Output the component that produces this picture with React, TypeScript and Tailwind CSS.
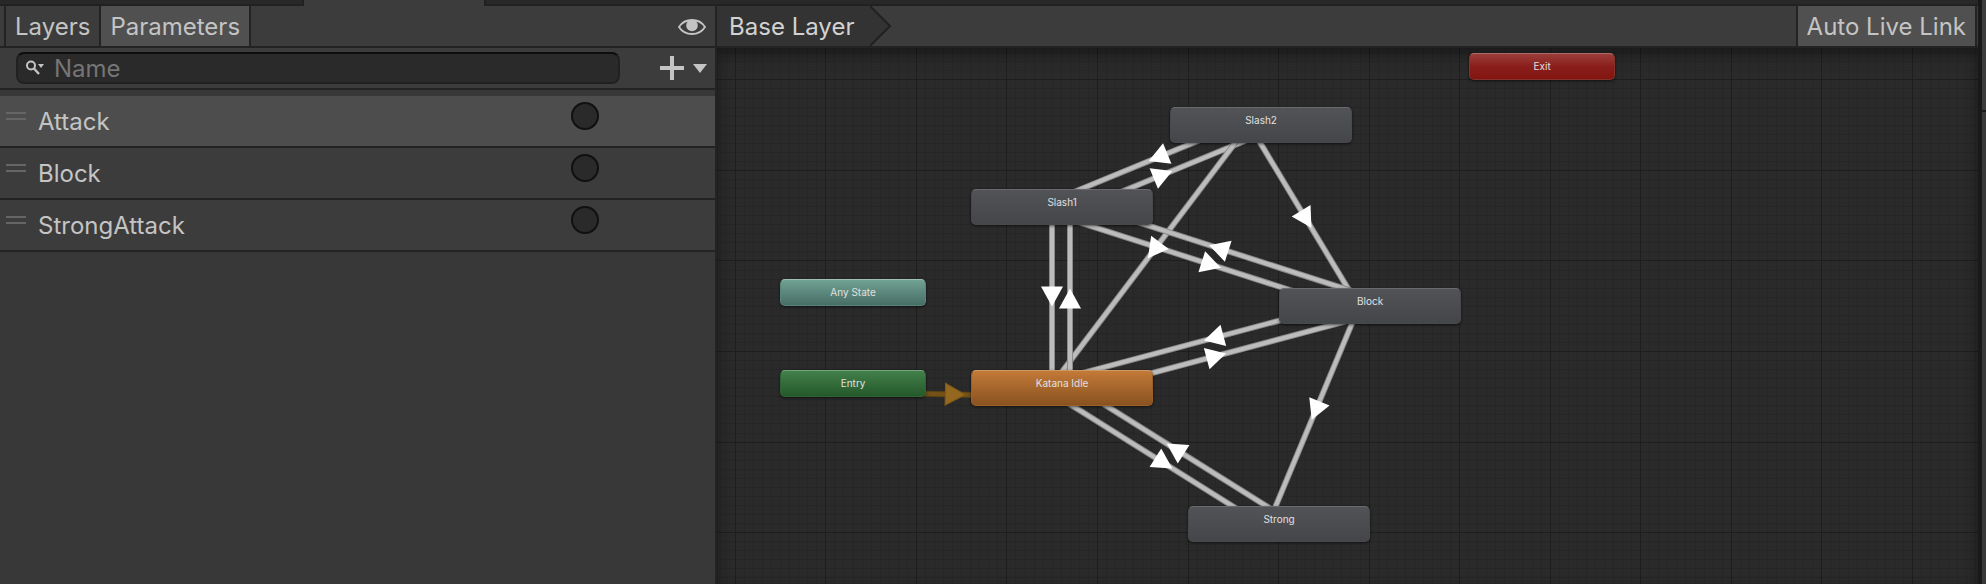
import type { ReactNode } from "react";

type Point = { x: number; y: number };

type StateNode = {
  id: string;
  label: string;
  x: number;
  y: number;
  kind: "state" | "default" | "any" | "entry" | "exit";
};

const NODES: StateNode[] = [
  { id: "exit", label: "Exit", x: 752, y: 5, kind: "exit" },
  { id: "slash2", label: "Slash2", x: 453, y: 59, kind: "state" },
  { id: "slash1", label: "Slash1", x: 254, y: 141, kind: "state" },
  { id: "any", label: "Any State", x: 63, y: 231, kind: "any" },
  { id: "block", label: "Block", x: 562, y: 240, kind: "state" },
  { id: "entry", label: "Entry", x: 63, y: 322, kind: "entry" },
  { id: "idle", label: "Katana Idle", x: 254, y: 322, kind: "default" },
  { id: "strong", label: "Strong", x: 471, y: 458, kind: "state" },
];

const TRANSITIONS: [string, string][] = [
  ["entry", "idle"],
  ["slash1", "slash2"],
  ["slash2", "slash1"],
  ["slash2", "idle"],
  ["slash2", "block"],
  ["slash1", "block"],
  ["block", "slash1"],
  ["slash1", "idle"],
  ["idle", "slash1"],
  ["block", "idle"],
  ["idle", "block"],
  ["block", "strong"],
  ["idle", "strong"],
  ["strong", "idle"],
];

const KIND_STYLE: Record<StateNode["kind"], string> = {
  state:
    "w-[182px] h-9 bg-linear-to-b from-[#525357] to-[#454649] border-[#48494c] border-t-[#6a6b6e]",
  default:
    "w-[182px] h-9 bg-linear-to-b from-[#c27a38] to-[#8a5220] border-[#9a6027] border-t-[#d09a66]",
  any: "w-[146px] h-[27px] bg-linear-to-b from-[#71a293] to-[#476e66] border-[#5a8379] border-t-[#9cc0b5]",
  entry:
    "w-[146px] h-[27px] bg-linear-to-b from-[#42804a] to-[#25592b] border-[#2f6336] border-t-[#74a57a]",
  exit: "w-[146px] h-[27px] bg-linear-to-b from-[#9b3d3a] via-[#8a1e1b] to-[#83150f] border-[#87312d] border-t-[#b06a66]",
};

function centerOf(id: string): Point {
  const node = NODES.find((n) => n.id === id)!;
  const wide = node.kind === "state" || node.kind === "default";
  return { x: node.x + (wide ? 90 : 72), y: node.y + (wide ? 18 : 13) };
}

const SIDE_OFFSET = 9;

function Transition({ from, to, part }: { from: string; to: string; part: "line" | "arrow" }) {
  const a = centerOf(from);
  const b = centerOf(to);
  const length = Math.hypot(b.x - a.x, b.y - a.y);
  const angle = (Math.atan2(b.y - a.y, b.x - a.x) * 180) / Math.PI;
  const isEntry = from === "entry";
  const mid = length / 2;
  return (
    <g transform={`translate(${a.x} ${a.y}) rotate(${angle})`}>
      {part === "line" ? (
        <>
          <line
            x1={0}
            x2={length}
            y1={SIDE_OFFSET}
            y2={SIDE_OFFSET}
            stroke={isEntry ? "#5d4315" : "#8a8a8a"}
            strokeWidth={6}
          />
          <line
            x1={0}
            x2={length}
            y1={SIDE_OFFSET}
            y2={SIDE_OFFSET}
            stroke={isEntry ? "#735117" : "#bcbcbc"}
            strokeWidth={4}
          />
        </>
      ) : (
        <path
          d={`M${mid - 11} ${SIDE_OFFSET - 11}L${mid + 9} ${SIDE_OFFSET}L${mid - 11} ${SIDE_OFFSET + 11}Z`}
          fill={isEntry ? "#94691f" : "#ffffff"}
          stroke={isEntry ? "#7d591a" : "none"}
        />
      )}
    </g>
  );
}

const MAJOR = 90.54;
const MINOR = MAJOR / 10;
const GRID_X = 18.3;
const GRID_Y = 31.9;

function gridPath(step: number, reach: number) {
  const segments: string[] = [];
  const count = Math.ceil(reach / step);
  const lead = Math.ceil(GRID_Y / step);
  for (let i = -lead; i < count; i++) {
    const x = Math.floor(GRID_X + i * step) + 0.5;
    const y = Math.floor(GRID_Y + i * step) + 0.5;
    segments.push(`M${x} 0V${reach}M0 ${y}H${reach}`);
  }
  return segments.join("");
}

const MINOR_PATH = gridPath(MINOR, 3000);
const MAJOR_PATH = gridPath(MAJOR, 3000);

function SearchIcon() {
  return (
    <svg width="18" height="16" viewBox="0 0 18 16" fill="none" aria-hidden="true">
      <circle cx="5" cy="5.5" r="4" stroke="#c4c4c4" strokeWidth="2" />
      <path d="M8 8.5L13 14" stroke="#c4c4c4" strokeWidth="2.4" />
      <path d="M12 4H18L15 8Z" fill="#c4c4c4" />
    </svg>
  );
}

function EyeIcon() {
  return (
    <svg width="28" height="16" viewBox="0 0 28 16" fill="none" aria-hidden="true">
      <path
        d="M1 8C4 3.2 8.6 1 14 1S24 3.2 27 8C24 12.8 19.4 15 14 15S4 12.8 1 8Z"
        stroke="#c4c4c4"
        strokeWidth="1.8"
      />
      <circle cx="14" cy="6.4" r="5.8" fill="#c4c4c4" />
    </svg>
  );
}

function ToolbarTab({ active, children }: { active?: boolean; children: ReactNode }) {
  return (
    <button
      type="button"
      className={
        active
          ? "flex h-10 items-center border-r-2 border-[#232323] bg-[#505050] px-[9px] pt-0.5 text-[#c4c4c4]"
          : "flex h-10 items-center border-r-2 border-[#232323] px-[9px] pt-0.5 text-[#c4c4c4]"
      }
    >
      {children}
    </button>
  );
}

function ParameterRow({ name, selected }: { name: string; selected?: boolean }) {
  const id = `param-${name}`;
  return (
    <li
      className={
        selected
          ? "flex h-13 items-start border-b-2 border-[#232323] bg-[#4d4d4d]"
          : "flex h-13 items-start border-b-2 border-[#232323] bg-[#3c3c3c]"
      }
    >
      <span className="mt-4 ml-1.5 h-2 w-5 border-y-2 border-[#656565]" />
      <label htmlFor={id} className="ml-3 flex-1 self-center pt-0.5 text-[#c4c4c4]">
        {name}
      </label>
      <input
        id={id}
        type="radio"
        name={name}
        className="mt-1.5 mr-[116px] size-7 appearance-none rounded-full border-2 border-[#101010] bg-[#2a2a2a] checked:bg-[#c4c4c4]"
      />
    </li>
  );
}

function ParametersPanel() {
  return (
    <aside className="flex w-[calc(36%+5px)] shrink-0 flex-col border-r-2 border-[#232323] bg-[#383838]">
      <div className="flex h-[42px] items-start border-b-2 border-[#232323] bg-[#3c3c3c]">
        <div className="ml-1 flex border-l-2 border-[#232323]">
          <ToolbarTab>Layers</ToolbarTab>
          <ToolbarTab active>Parameters</ToolbarTab>
        </div>
        <button type="button" aria-label="Toggle visibility" className="mt-[13px] mr-[9px] ml-auto">
          <EyeIcon />
        </button>
      </div>
      <div className="flex h-[42px] items-center border-b-2 border-[#232323] bg-[#3c3c3c] pl-4">
        <label className="flex h-8 flex-1 items-center gap-2.5 rounded-lg border-2 border-[#212121] border-t-[#0d0d0d] bg-[#2a2a2a] pl-2">
          <SearchIcon />
          <input
            type="text"
            aria-label="Name"
            placeholder="Name"
            className="min-w-0 flex-1 bg-transparent pt-0.5 text-[#c4c4c4] outline-none placeholder:text-[#757575]"
          />
        </label>
        <button type="button" aria-label="Add parameter" className="mr-2 ml-10">
          <svg width="47" height="24" viewBox="0 0 47 24" fill="#c4c4c4" aria-hidden="true">
            <path d="M10 0H14V10H24V14H14V24H10V14H0V10H10Z" />
            <path d="M33 8H47L40 17Z" />
          </svg>
        </button>
      </div>
      <ul className="pt-1.5">
        <ParameterRow name="Attack" selected />
        <ParameterRow name="Block" />
        <ParameterRow name="StrongAttack" />
      </ul>
    </aside>
  );
}

function GraphPanel() {
  return (
    <main className="flex min-w-0 flex-1 flex-col">
      <div className="flex h-[42px] border-b-2 border-[#232323] bg-[#3c3c3c]">
        <button
          type="button"
          className="flex h-10 items-center bg-[#333333] pt-0.5 pr-4 pl-3 text-[#d2d2d2]"
        >
          Base Layer
        </button>
        <svg width="22" height="40" viewBox="0 0 22 40" aria-hidden="true">
          <path d="M0 0L20 20L0 40Z" fill="#333333" />
          <path d="M0 0L20 20L0 40" fill="none" stroke="#212121" strokeWidth="2" />
        </svg>
        <button
          type="button"
          className="mr-px ml-auto flex h-10 items-center border-x-2 border-[#232323] bg-[#505050] px-[9px] pt-0.5 text-[#c4c4c4]"
        >
          Auto Live Link
        </button>
      </div>
      <div className="relative min-h-[536px] flex-1 overflow-hidden bg-[#2a2a2a]">
        <svg className="absolute inset-0 size-full" aria-hidden="true">
          <path d={MINOR_PATH} stroke="#262626" />
          <path d={MAJOR_PATH} stroke="#1e1e1e" />
        </svg>
        <div className="absolute inset-0 shadow-[inset_0_6px_14px_rgba(0,0,0,0.4)]" />
        <svg className="absolute inset-0 size-full" aria-hidden="true">
          {TRANSITIONS.map(([from, to]) => (
            <Transition key={`line-${from}-${to}`} from={from} to={to} part="line" />
          ))}
          {TRANSITIONS.map(([from, to]) => (
            <Transition key={`arrow-${from}-${to}`} from={from} to={to} part="arrow" />
          ))}
        </svg>
        {NODES.map((node) => (
          <div
            key={node.id}
            className={`absolute flex justify-center rounded-[5px] border pt-[5px] text-[10px] leading-[14px] text-[#e0e0e0] shadow-[0_1px_3px_rgba(0,0,0,0.6)] ${KIND_STYLE[node.kind]}`}
            style={{ left: node.x, top: node.y }}
          >
            {node.label}
          </div>
        ))}
      </div>
    </main>
  );
}

export default function App() {
  return (
    <div className="flex min-h-screen bg-[#191919] font-['Inter',sans-serif] text-2xl leading-8">
      <div className="flex min-w-0 flex-1 flex-col">
        <div className="flex h-1.5">
          <div className="w-[304px] border-r-2 border-b-2 border-[#212121] bg-[#282828]" />
          <div className="w-[180px] bg-[#3c3c3c]" />
          <div className="flex-1 border-b-2 border-l-2 border-[#212121] bg-[#282828]" />
        </div>
        <div className="flex flex-1">
          <ParametersPanel />
          <GraphPanel />
        </div>
      </div>
      <div className="ml-1 w-1 bg-[#383838]">
        <div className="h-28 border-b-2 border-[#191919] bg-[#3c3c3c]" />
      </div>
    </div>
  );
}
